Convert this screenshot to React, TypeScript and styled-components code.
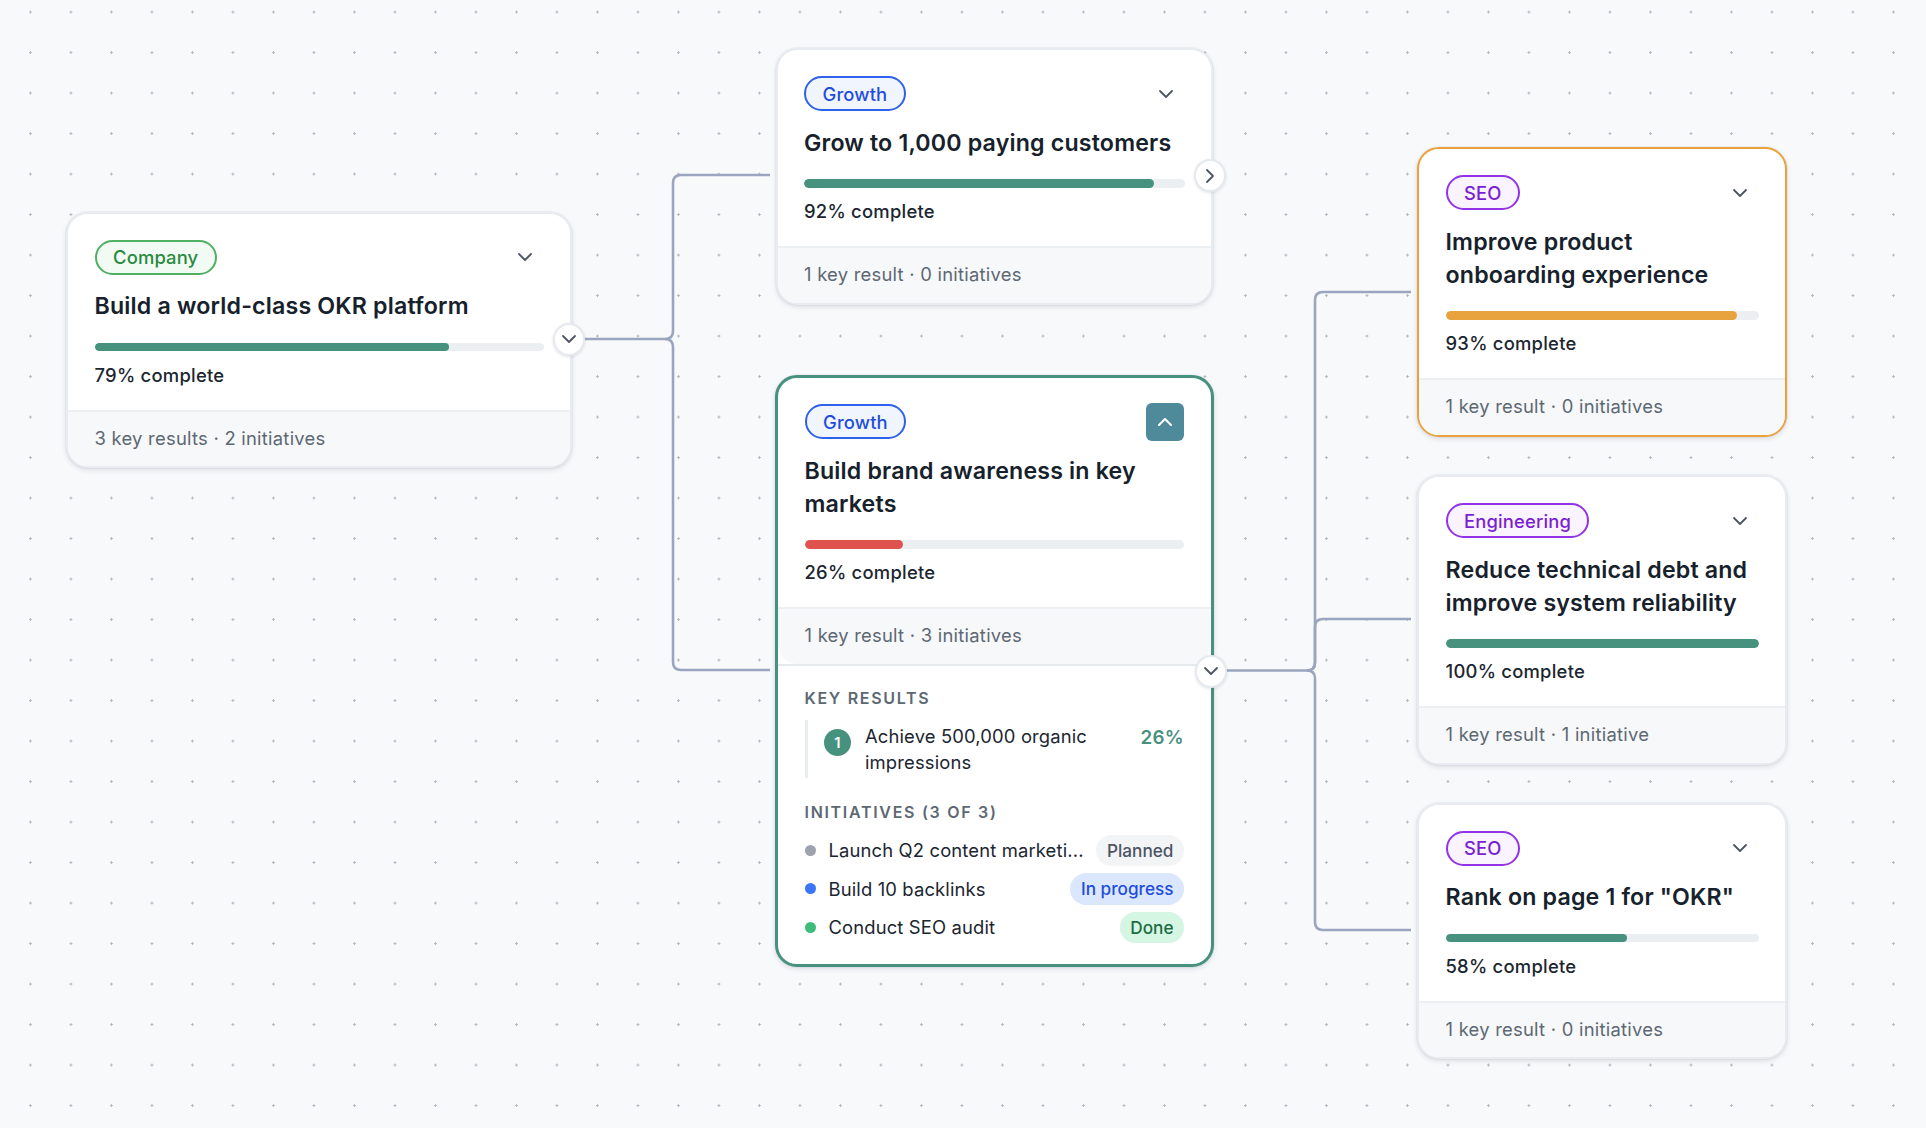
import React from "react";
import styled, { createGlobalStyle } from "styled-components";
import { ChevronDown, ChevronRight, ChevronUp } from "lucide-react";

const GlobalStyle = createGlobalStyle`
  html, body {
    margin: 0;
    padding: 0;
    background: #f8f9fb;
  }

  body {
    font-family: Inter, "Noto Sans", sans-serif;
    color: #16212b;
  }
`;

type Variant = "default" | "warning" | "active";
type TagKind = "company" | "growth" | "purple";
type Status = "planned" | "progress" | "done";

const tagColors = {
  company: { border: "#4fb063", bg: "#f1fbf4", text: "#2a8a3e" },
  growth: { border: "#2f62ec", bg: "#f0f5fe", text: "#1f4ddb" },
  purple: { border: "#9233ea", bg: "#f9f4ff", text: "#7c1fd0" },
};

const statusColors = {
  planned: { bg: "#f3f4f6", text: "#4b5563", dot: "#9ca3af" },
  progress: { bg: "#dbe7fd", text: "#1f4ddb", dot: "#3b76f6" },
  done: { bg: "#d5f6e3", text: "#1c6b45", dot: "#3dbb7a" },
};

const borders = {
  default: "2px solid #e8ebef",
  warning: "2px solid #eba23e",
  active: "3px solid #47917f",
};

const Canvas = styled.div`
  position: relative;
  width: 1926px;
  height: 1128px;
  overflow: hidden;
  background-color: #f8f9fb;
  background-image: radial-gradient(circle, #b4b8bf 1.1px, transparent 1.3px);
  background-size: 40.5px 40.5px;
  background-position: 10.2px -8.2px;
`;

const Lines = styled.svg`
  position: absolute;
  inset: 0;
`;

const Card = styled.article<{ $x: number; $y: number; $w: number; $variant: Variant }>`
  position: absolute;
  left: ${(p) => p.$x}px;
  top: ${(p) => p.$y}px;
  width: ${(p) => p.$w}px;
  box-sizing: border-box;
  background: #fff;
  border: ${(p) => borders[p.$variant]};
  border-radius: 22px;
  box-shadow: 0 0 0 1px rgba(30, 40, 60, 0.03), 0 2px 5px rgba(30, 40, 60, 0.13);
`;

const Main = styled.div`
  padding: 24.5px 26.5px 21px;
`;

const Header = styled.div`
  display: flex;
  justify-content: space-between;
  align-items: center;
  height: 38px;
`;

const Tag = styled.span<{ $kind: TagKind }>`
  box-sizing: border-box;
  height: 35px;
  display: inline-flex;
  align-items: center;
  padding: 0 16.5px;
  border-radius: 18px;
  border: 2px solid ${(p) => tagColors[p.$kind].border};
  background: ${(p) => tagColors[p.$kind].bg};
  color: ${(p) => tagColors[p.$kind].text};
  font-size: 18.4px;
  font-weight: 500;
  letter-spacing: 0.15px;
`;

const MenuButton = styled.button<{ $open?: boolean }>`
  width: 38px;
  height: 38px;
  padding: 0;
  display: flex;
  align-items: center;
  justify-content: center;
  border: none;
  border-radius: 6px;
  background: ${(p) => (p.$open ? "#4f8a9b" : "transparent")};
  color: ${(p) => (p.$open ? "#fff" : "#4b5563")};
`;

const Title = styled.h3`
  margin: 14px 0 0;
  font-size: 23.2px;
  line-height: 33px;
  font-weight: 600;
  letter-spacing: 0.17px;
  color: #16212b;
`;

const Track = styled.div`
  margin-top: 19.5px;
  height: 8.5px;
  border-radius: 5px;
  background: #ebeff2;
  overflow: hidden;
`;

const Fill = styled.div<{ $tone: string }>`
  height: 100%;
  border-radius: 5px;
  background: ${(p) => p.$tone};
`;

const Complete = styled.div`
  margin-top: 10.5px;
  font-size: 18.4px;
  line-height: 27px;
  font-weight: 500;
  letter-spacing: 0.25px;
  color: #1b2630;
`;

const Footer = styled.div`
  padding: 13px 26.5px 14.5px;
  border-top: 2px solid #edf0f3;
  border-radius: 0 0 20px 20px;
  background: #f7f8fa;
  font-size: 18.4px;
  line-height: 27px;
  letter-spacing: 0.25px;
  color: #5d6873;
`;

const Details = styled.div`
  padding: 20.5px 26.5px 21px;
  border-top: 2px solid #e6eaed;
`;

const SectionLabel = styled.div`
  font-size: 16px;
  line-height: 24px;
  font-weight: 600;
  letter-spacing: 1.7px;
  color: #5d6873;
`;

const KeyResultRow = styled.div`
  margin: 10px 0 22px;
  padding: 3px 0 3px 16.5px;
  display: flex;
  align-items: flex-start;
  border-left: 3px solid #e9edf0;
`;

const NumberBadge = styled.span`
  flex: none;
  width: 27px;
  height: 27px;
  margin-top: 6px;
  border-radius: 50%;
  display: flex;
  align-items: center;
  justify-content: center;
  background: #47917f;
  color: #fff;
  font-size: 14.8px;
  font-weight: 600;
`;

const KeyResultText = styled.div`
  flex: 1;
  margin-left: 14px;
  padding-right: 30px;
  font-size: 18.4px;
  line-height: 26px;
  letter-spacing: 0.15px;
  color: #1b2630;
`;

const Percent = styled.span`
  flex: none;
  margin-top: 2px;
  font-size: 18.8px;
  line-height: 26px;
  font-weight: 600;
  letter-spacing: 0.3px;
  color: #47917f;
`;

const InitiativeList = styled.ul`
  list-style: none;
  margin: 10.5px 0 0;
  padding: 0;
  display: flex;
  flex-direction: column;
  gap: 7px;
`;

const InitiativeRow = styled.li`
  display: flex;
  align-items: center;
  height: 31.5px;
`;

const Dot = styled.span<{ $status: Status }>`
  flex: none;
  width: 11px;
  height: 11px;
  margin-right: 13px;
  border-radius: 50%;
  background: ${(p) => statusColors[p.$status].dot};
`;

const InitiativeName = styled.span`
  flex: 1;
  white-space: nowrap;
  font-size: 18.4px;
  line-height: 24px;
  letter-spacing: 0.15px;
  color: #1b2630;
`;

const Pill = styled.span<{ $status: Status }>`
  flex: none;
  height: 31.5px;
  padding: 0 10.5px;
  display: flex;
  align-items: center;
  border-radius: 16px;
  background: ${(p) => statusColors[p.$status].bg};
  color: ${(p) => statusColors[p.$status].text};
  font-size: 17.2px;
  font-weight: 500;
`;

const Toggle = styled.button<{ $top: number; $right: number }>`
  position: absolute;
  top: ${(p) => p.$top}px;
  right: ${(p) => p.$right}px;
  box-sizing: border-box;
  width: 32px;
  height: 33px;
  padding: 0;
  display: flex;
  align-items: center;
  justify-content: center;
  border: 2px solid #e6e9ed;
  border-radius: 50%;
  background: #fff;
  color: #4b5563;
  box-shadow: 0 1px 3px rgba(30, 40, 60, 0.12);
`;

type Initiative = { name: string; status: Status; label: string };

type NodeProps = {
  x: number;
  y: number;
  w: number;
  variant?: Variant;
  tag: string;
  kind: TagKind;
  title: React.ReactNode;
  percent: number;
  tone: string;
  meta: string;
  toggle?: { icon: "down" | "right"; top: number; right: number };
  open?: boolean;
  children?: React.ReactNode;
};

const TEAL = "#47917f";

const Node: React.FC<NodeProps> = ({ x, y, w, variant = "default", tag, kind, title, percent, tone, meta, toggle, open, children }) => (
  <Card $x={x} $y={y} $w={w} $variant={variant}>
    <Main>
      <Header>
        <Tag $kind={kind}>{tag}</Tag>
        <MenuButton $open={open}>{open ? <ChevronUp size={24} /> : <ChevronDown size={24} strokeWidth={1.8} />}</MenuButton>
      </Header>
      <Title>{title}</Title>
      <Track>
        <Fill $tone={tone} style={{ width: `${percent}%` }} />
      </Track>
      <Complete>{percent}% complete</Complete>
    </Main>
    <Footer>{meta}</Footer>
    {children}
    {toggle && (
      <Toggle $top={toggle.top} $right={toggle.right}>
        {toggle.icon === "down" ? <ChevronDown size={24} strokeWidth={1.8} /> : <ChevronRight size={24} strokeWidth={1.8} />}
      </Toggle>
    )}
  </Card>
);

const initiatives: Initiative[] = [
  { name: "Launch Q2 content marketi...", status: "planned", label: "Planned" },
  { name: "Build 10 backlinks", status: "progress", label: "In progress" },
  { name: "Conduct SEO audit", status: "done", label: "Done" },
];

const Connectors = () => (
  <Lines width="1926" height="1128" fill="none" stroke="#9aa6bf" strokeWidth="2.6">
    <path d="M584 339H665Q673 339 673 331V183Q673 175 681 175H770" />
    <path d="M665 339Q673 339 673 347V662Q673 670 681 670H770" />
    <path d="M1226 670.5H1307Q1315 670.5 1315 662.5V300Q1315 292 1323 292H1411" />
    <path d="M1307 670.5Q1315 670.5 1315 662.5V627Q1315 619 1323 619H1411" />
    <path d="M1307 670.5Q1315 670.5 1315 678.5V922Q1315 930 1323 930H1411" />
  </Lines>
);

const App: React.FC = () => (
  <Canvas>
    <GlobalStyle />
    <Connectors />
    <Node
      x={66}
      y={211.6}
      w={506}
      tag="Company"
      kind="company"
      title="Build a world-class OKR platform"
      percent={79}
      tone={TEAL}
      meta="3 key results · 2 initiatives"
      toggle={{ icon: "down", top: 109.4, right: -15 }}
    />
    <Node
      x={775.5}
      y={48}
      w={437.5}
      tag="Growth"
      kind="growth"
      title="Grow to 1,000 paying customers"
      percent={92}
      tone={TEAL}
      meta="1 key result · 0 initiatives"
      toggle={{ icon: "right", top: 109, right: -15 }}
    />
    <Node
      x={775}
      y={375}
      w={438.5}
      variant="active"
      tag="Growth"
      kind="growth"
      title="Build brand awareness in key markets"
      percent={26}
      tone="#df524d"
      meta="1 key result · 3 initiatives"
      toggle={{ icon: "down", top: 276.5, right: -16 }}
      open
    >
      <Details>
        <SectionLabel>KEY RESULTS</SectionLabel>
        <KeyResultRow>
          <NumberBadge>1</NumberBadge>
          <KeyResultText>Achieve 500,000 organic impressions</KeyResultText>
          <Percent>26%</Percent>
        </KeyResultRow>
        <SectionLabel>INITIATIVES (3 OF 3)</SectionLabel>
        <InitiativeList>
          {initiatives.map((item) => (
            <InitiativeRow key={item.name}>
              <Dot $status={item.status} />
              <InitiativeName>{item.name}</InitiativeName>
              <Pill $status={item.status}>{item.label}</Pill>
            </InitiativeRow>
          ))}
        </InitiativeList>
      </Details>
    </Node>
    <Node
      x={1417}
      y={147}
      w={370}
      variant="warning"
      tag="SEO"
      kind="purple"
      title="Improve product onboarding experience"
      percent={93}
      tone="#e9a33e"
      meta="1 key result · 0 initiatives"
    />
    <Node
      x={1417}
      y={475}
      w={370}
      tag="Engineering"
      kind="purple"
      title="Reduce technical debt and improve system reliability"
      percent={100}
      tone={TEAL}
      meta="1 key result · 1 initiative"
    />
    <Node
      x={1417}
      y={802.5}
      w={370}
      tag="SEO"
      kind="purple"
      title={'Rank on page 1 for "OKR"'}
      percent={58}
      tone={TEAL}
      meta="1 key result · 0 initiatives"
    />
  </Canvas>
);

export default App;
